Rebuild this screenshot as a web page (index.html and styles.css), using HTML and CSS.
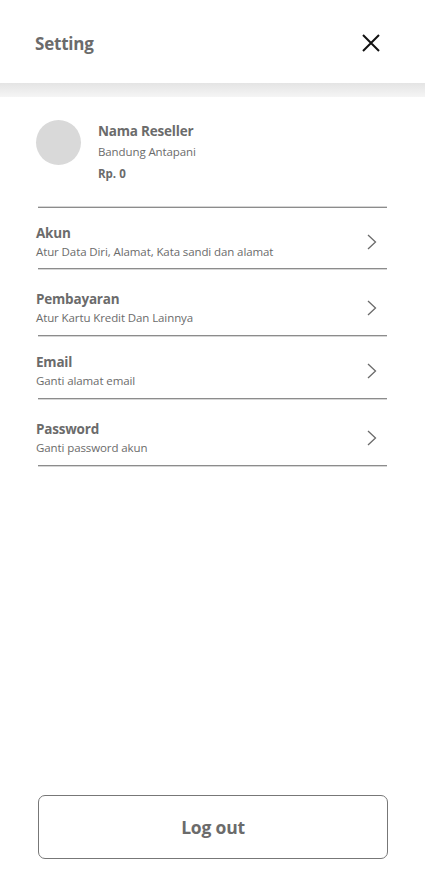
FILE: index.html
```html
<!DOCTYPE html>
<html lang="id">
<head>
<meta charset="utf-8">
<title>Setting</title>
<link rel="stylesheet" href="styles.css">
</head>
<body>
<div class="page">
  <header class="header">
    <h1 class="header-title">Setting</h1>
    <button class="close-btn" aria-label="Tutup">
      <svg width="18" height="18" viewBox="0 0 18 18"><path d="M1 1L17 17M17 1L1 17" stroke="#111" stroke-width="2" fill="none"/></svg>
    </button>
  </header>
  <div class="header-shadow"></div>

  <section class="profile">
    <div class="avatar"></div>
    <div class="profile-info">
      <div class="profile-name">Nama Reseller</div>
      <div class="profile-city">Bandung Antapani</div>
      <div class="profile-balance">Rp. 0</div>
    </div>
  </section>

  <ul class="menu">
    <li class="menu-item row-a">
      <div class="menu-text">
        <div class="menu-title">Akun</div>
        <div class="menu-sub">Atur Data Diri, Alamat, Kata sandi dan alamat</div>
      </div>
      <svg class="chev" width="10" height="16" viewBox="0 0 10 16"><path d="M1 1L8.5 8L1 15" stroke="#6a6a6a" stroke-width="1.3" fill="none"/></svg>
    </li>
    <li class="menu-item row-b">
      <div class="menu-text">
        <div class="menu-title">Pembayaran</div>
        <div class="menu-sub">Atur Kartu Kredit Dan Lainnya</div>
      </div>
      <svg class="chev" width="10" height="16" viewBox="0 0 10 16"><path d="M1 1L8.5 8L1 15" stroke="#6a6a6a" stroke-width="1.3" fill="none"/></svg>
    </li>
    <li class="menu-item row-c">
      <div class="menu-text">
        <div class="menu-title">Email</div>
        <div class="menu-sub">Ganti alamat email</div>
      </div>
      <svg class="chev" width="10" height="16" viewBox="0 0 10 16"><path d="M1 1L8.5 8L1 15" stroke="#6a6a6a" stroke-width="1.3" fill="none"/></svg>
    </li>
    <li class="menu-item row-b">
      <div class="menu-text">
        <div class="menu-title">Password</div>
        <div class="menu-sub">Ganti password akun</div>
      </div>
      <svg class="chev" width="10" height="16" viewBox="0 0 10 16"><path d="M1 1L8.5 8L1 15" stroke="#6a6a6a" stroke-width="1.3" fill="none"/></svg>
    </li>
  </ul>

  <div class="footer">
    <button class="logout-btn">Log out</button>
  </div>
</div>
</body>
</html>
```
FILE: styles.css
```css
* { box-sizing: border-box; }
html, body { margin: 0; padding: 0; background: #fff; }
body {
  font-family: "Open Sans", "Noto Sans", "Liberation Sans", sans-serif;
  color: #6b6b6b;
}
.page {
  width: 425px;
  height: 882px;
  display: flex;
  flex-direction: column;
}
.header {
  height: 83px;
  display: flex;
  align-items: center;
  justify-content: space-between;
  padding: 3px 45px 0 35px;
  background: #fff;
}
.header-title {
  margin: 0;
  font-size: 17px;
  font-weight: 700;
  color: #6b6b6b;
  letter-spacing: -0.2px;
}
.close-btn {
  border: 0;
  background: none;
  padding: 0;
  width: 18px;
  height: 18px;
  display: flex;
}
.header-shadow {
  height: 14px;
  background: linear-gradient(#e4e4e4, #f5f5f5);
}
.profile {
  display: flex;
  align-items: flex-start;
  gap: 17px;
  padding: 23px 0 0 36px;
  height: 110px;
}
.avatar {
  width: 45px;
  height: 45px;
  border-radius: 50%;
  background: #d9d9d9;
  flex-shrink: 0;
}
.profile-info { padding-top: 2px; }
.profile-name {
  font-size: 13.5px;
  font-weight: 700;
  line-height: 18px;
  letter-spacing: -0.2px;
}
.profile-city {
  font-size: 11.5px;
  line-height: 16px;
  margin-top: 4px;
  letter-spacing: -0.1px;
}
.profile-balance {
  font-size: 11.5px;
  font-weight: 700;
  line-height: 16px;
  margin-top: 6px;
}
.menu {
  list-style: none;
  margin: 0 38px 0 38px;
  padding: 0;
  border-top: 1px solid #8c8c8c;
  box-shadow: 0 -1px 0 #d6d6d6;
}
.menu-item {
  display: flex;
  align-items: center;
  justify-content: space-between;
  padding-right: 10px;
  border-bottom: 1px solid #8c8c8c;
  box-shadow: 0 1px 0 #d6d6d6;
}
.menu-text { margin-left: -2px; }
.row-a { height: 61px; padding-top: 8px; }
.row-b { height: 67px; padding-top: 11px; }
.row-c { height: 63px; padding-top: 8px; }
.menu-title {
  font-size: 13.5px;
  font-weight: 700;
  line-height: 18px;
  letter-spacing: -0.2px;
}
.menu-sub {
  font-size: 11.5px;
  line-height: 16px;
  margin-top: 2px;
  letter-spacing: -0.1px;
}
.chev { flex-shrink: 0; }
.footer {
  margin-top: auto;
  padding: 0 37px 23px 38px;
}
.logout-btn {
  width: 100%;
  height: 64px;
  border: 1px solid #777;
  border-radius: 7px;
  background: #fff;
  font-family: inherit;
  font-size: 17.5px;
  font-weight: 700;
  color: #6b6b6b;
  letter-spacing: -0.2px;
}
```
